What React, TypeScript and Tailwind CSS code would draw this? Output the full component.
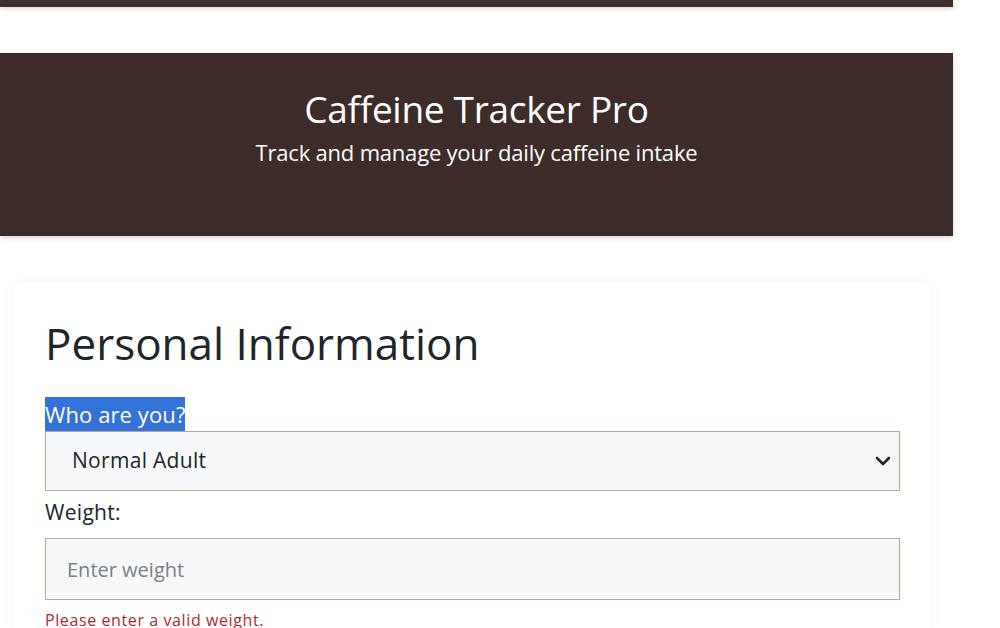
import React from "react";

const font = { fontFamily: '"Open Sans", "Noto Sans", sans-serif' };

export default function App() {
  return (
    <div className="min-h-screen w-full bg-white text-[#212529]" style={font}>
      {/* tail of the previous section */}
      <div className="h-[7px] w-[953px] bg-[#3e2c2a] shadow-[0_2px_4px_rgba(0,0,0,0.15)]" />

      <header className="mt-[46px] flex h-[183px] w-[953px] flex-col items-center bg-[#3e2c2a] pt-[32px] text-white shadow-[0_2px_5px_rgba(0,0,0,0.15)]">
        <h1 className="text-[37px] leading-[48px] tracking-[-0.3px]">Caffeine Tracker Pro</h1>
        <p className="mt-[5px] text-[22px] leading-[28px] tracking-[-0.2px]">Track and manage your daily caffeine intake</p>
      </header>

      <main className="ml-[12px] mt-[46px] w-[920px] rounded-lg bg-white px-[33px] pt-[33px] shadow-[0_0_10px_rgba(0,0,0,0.06)]">
        <h2 className="text-[44px] leading-[56px] text-[#212529]">Personal Information</h2>

        <div className="mt-[26px]">
          <label className="inline-block bg-[#3372d8] text-[22px] leading-[34px] tracking-[0.1px] text-white">
            Who are you?
          </label>
          <div className="relative">
            <select className="h-[60px] w-[855px] appearance-none border border-[#bfa58d] bg-[#f6f8fa] pl-[26px] text-[21px] tracking-[0.3px] text-[#212529] outline-none">
              <option>Normal Adult</option>
            </select>
            <svg
              className="pointer-events-none absolute left-[830px] top-[24px]"
              width="16"
              height="12"
              viewBox="0 0 16 12"
              fill="none"
            >
              <path d="M2 3l6 6 6-6" stroke="#212529" strokeWidth="2.6" strokeLinecap="round" strokeLinejoin="round" />
            </svg>
          </div>
        </div>

        <div className="mt-[4px]">
          <label className="block text-[21px] leading-[34px] tracking-[0.3px] text-[#212529]">Weight:</label>
          <input
            placeholder="Enter weight"
            className="mt-[9px] h-[62px] w-[855px] border border-[#bfa58d] bg-[#f6f8fa] pl-[21px] text-[20px] outline-none placeholder:text-[#7a7f85]"
          />
          <p className="mt-[9px] text-[16px] leading-[22px] tracking-[0.6px] text-[#b3262f]">Please enter a valid weight.</p>
        </div>
      </main>
    </div>
  );
}
